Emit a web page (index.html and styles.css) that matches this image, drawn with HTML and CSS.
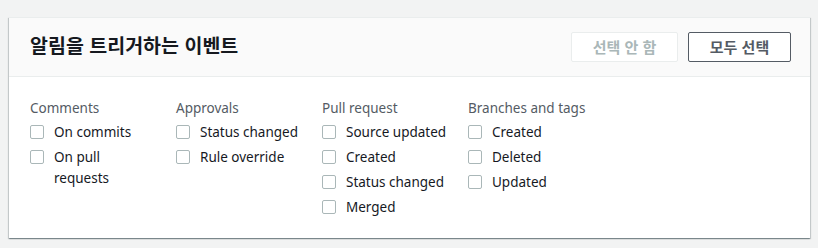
FILE: index.html
```html
<!DOCTYPE html>
<html lang="ko">
<head>
    <meta charset="UTF-8">
    <title>알림을 트리거하는 이벤트</title>
    <link rel="stylesheet" href="styles.css">
</head>
<body>
    <section class="panel">
        <header class="panel-header">
            <h2 class="panel-title">알림을 트리거하는 이벤트</h2>
            <div class="panel-actions">
                <button class="btn" disabled>선택 안 함</button>
                <button class="btn">모두 선택</button>
            </div>
        </header>

        <div class="panel-body">
            <div class="event-group">
                <div class="group-title">Comments</div>
                <label class="check"><span class="box"></span><span class="check-label">On commits</span></label>
                <label class="check"><span class="box"></span><span class="check-label">On pull requests</span></label>
            </div>
            <div class="event-group">
                <div class="group-title">Approvals</div>
                <label class="check"><span class="box"></span><span class="check-label">Status changed</span></label>
                <label class="check"><span class="box"></span><span class="check-label">Rule override</span></label>
            </div>
            <div class="event-group">
                <div class="group-title">Pull request</div>
                <label class="check"><span class="box"></span><span class="check-label">Source updated</span></label>
                <label class="check"><span class="box"></span><span class="check-label">Created</span></label>
                <label class="check"><span class="box"></span><span class="check-label">Status changed</span></label>
                <label class="check"><span class="box"></span><span class="check-label">Merged</span></label>
            </div>
            <div class="event-group">
                <div class="group-title">Branches and tags</div>
                <label class="check"><span class="box"></span><span class="check-label">Created</span></label>
                <label class="check"><span class="box"></span><span class="check-label">Deleted</span></label>
                <label class="check"><span class="box"></span><span class="check-label">Updated</span></label>
            </div>
        </div>
    </section>
</body>
</html>
```

FILE: styles.css
```css
* {
    margin: 0;
    padding: 0;
    box-sizing: border-box;
}

body {
    font-family: 'Noto Sans', 'Noto Sans CJK KR', sans-serif;
    font-size: 13.5px;
    line-height: 21px;
    color: #16191f;
    background: #f2f3f3;
    padding: 17px 8px 10px 9px;
}

/* Panel */
.panel {
    background: #fff;
    border-top: 1px solid #eaeded;
    box-shadow: 0 1px 1px 0 rgba(0, 28, 36, 0.3),
        1px 1px 1px 0 rgba(0, 28, 36, 0.15),
        -1px 1px 1px 0 rgba(0, 28, 36, 0.15);
}

.panel-header {
    display: flex;
    align-items: center;
    justify-content: space-between;
    height: 59px;
    padding: 0 19px 0 21px;
    background: #fafafa;
    border-bottom: 1px solid #eaeded;
}

.panel-title {
    font-family: 'Noto Sans CJK KR', sans-serif;
    font-size: 19.5px;
    font-weight: 700;
    line-height: 24px;
    margin-top: -4px;
}

.panel-actions {
    display: flex;
    gap: 10px;
    margin-top: -1px;
}

.btn {
    height: 30px;
    padding: 0;
    font-family: 'Noto Sans CJK KR', sans-serif;
    font-size: 15px;
    font-weight: 700;
    color: #545b64;
    background: #fff;
    border: 1px solid #545b64;
    border-radius: 2px;
    cursor: pointer;
}

.btn:disabled {
    color: #aab7b8;
    border-color: #eaeded;
    cursor: default;
}

.btn:first-child {
    width: 107px;
}

.btn:last-child {
    width: 103px;
}

/* Event groups */
.panel-body {
    display: flex;
    gap: 20px;
    padding: 21px 21px 19px;
    height: 161px;
}

.event-group {
    width: 126px;
    display: flex;
    flex-direction: column;
    gap: 4px;
}

.group-title {
    color: #545b64;
    margin-bottom: -1px;
}

.check {
    display: flex;
    align-items: flex-start;
    gap: 10px;
}

.box {
    flex: none;
    width: 14px;
    height: 14px;
    margin-top: 3px;
    border: 1px solid #aab7b8;
    border-radius: 2px;
    background: #fff;
}

.check-label {
    max-width: 104px;
}
```
